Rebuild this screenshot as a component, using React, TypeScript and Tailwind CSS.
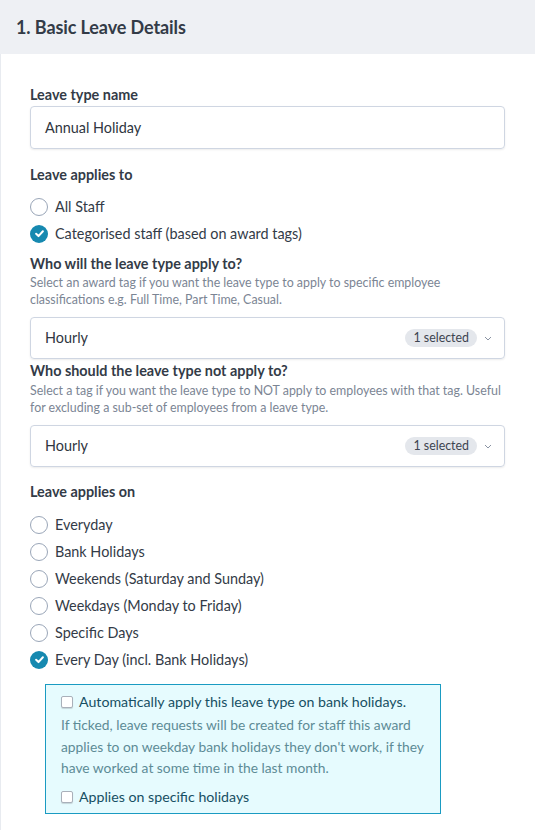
import React from "react";

const font = { fontFamily: "Lato, 'Open Sans', sans-serif" };

function Radio({ checked, label }: { checked?: boolean; label: string }) {
  return (
    <div className="flex items-center h-[27px]">
      {checked ? (
        <span className="w-[18px] h-[18px] rounded-full bg-[#1689b0] flex items-center justify-center">
          <svg width="11" height="11" viewBox="0 0 12 12">
            <path d="M2.3 6.3 L4.9 8.8 L9.7 3.6" stroke="white" strokeWidth="2.2" fill="none" strokeLinecap="round" strokeLinejoin="round" />
          </svg>
        </span>
      ) : (
        <span className="w-[18px] h-[18px] rounded-full border border-[#9aa6b8] bg-white" />
      )}
      <span className="ml-[7px] text-[14.4px] text-[#333b47]">{label}</span>
    </div>
  );
}

function Select() {
  return (
    <div className="h-[42px] rounded-[4px] border border-[#cfd6e2] shadow-[0_1px_2px_rgba(0,0,0,0.08)] flex items-center pl-[14px] pr-[12px]">
      <span className="text-[14.4px] text-[#2f3641] flex-1">Hourly</span>
      <span className="bg-[#e4e7ec] rounded-full px-[8px] h-[18px] flex items-center text-[12.4px] text-[#3d4450]">1 selected</span>
      <svg width="8" height="8" viewBox="0 0 8 8" className="ml-[7px]">
        <path d="M1 3 L4 6 L7 3" stroke="#8a93a3" strokeWidth="1" fill="none" />
      </svg>
    </div>
  );
}

function Checkbox() {
  return <span className="inline-block shrink-0 w-[12px] h-[12px] border border-[#a9b0ba] bg-white rounded-[2px] shadow-[0_1px_1px_rgba(0,0,0,0.15)]" />;
}

export default function App() {
  return (
    <div style={font} className="w-[535px] h-[830px] bg-white overflow-hidden">
      <div className="h-[54px] bg-[#eef0f4] flex items-center px-[16px]">
        <h2 className="text-[18px] font-bold text-[#333b47] tracking-[-0.1px]">1. Basic Leave Details</h2>
      </div>
      <div className="border-l border-[#e8ebf0] h-[776px] pl-[29px] pr-[30px] pt-[32px]">
        <div className="text-[14.4px] font-bold text-[#333b47] leading-[18px]">Leave type name</div>
        <div className="mt-[2px] h-[43px] rounded-[4px] border border-[#cfd6e2] shadow-[0_1px_2px_rgba(0,0,0,0.08)] flex items-center pl-[14px] text-[14.4px] text-[#2f3641]">
          Annual Holiday
        </div>
        <div className="mt-[17px] text-[14.4px] font-bold text-[#333b47] leading-[18px]">Leave applies to</div>
        <div className="mt-[9px]">
          <Radio label="All Staff" />
          <Radio checked label="Categorised staff (based on award tags)" />
        </div>
        <div className="mt-[8px] text-[14.4px] font-bold text-[#333b47] leading-[18px]">Who will the leave type apply to?</div>
        <div className="mt-[1px] text-[12.4px] text-[#7b8594] leading-[17px]">
          Select an award tag if you want the leave type to apply to specific employee classifications e.g. Full Time, Part Time, Casual.
        </div>
        <div className="mt-[9px]">
          <Select />
        </div>
        <div className="mt-[3px] text-[14.4px] font-bold text-[#333b47] leading-[18px]">Who should the leave type not apply to?</div>
        <div className="mt-[2px] text-[12.4px] text-[#7b8594] leading-[17px]">
          Select a tag if you want the leave type to NOT apply to employees with that tag. Useful for excluding a sub-set of employees from a leave type.
        </div>
        <div className="mt-[9px]">
          <Select />
        </div>
        <div className="mt-[16px] text-[14.4px] font-bold text-[#333b47] leading-[18px]">Leave applies on</div>
        <div className="mt-[10px]">
          <Radio label="Everyday" />
          <Radio label="Bank Holidays" />
          <Radio label="Weekends (Saturday and Sunday)" />
          <Radio label="Weekdays (Monday to Friday)" />
          <Radio label="Specific Days" />
          <Radio checked label="Every Day (incl. Bank Holidays)" />
        </div>
        <div className="ml-[15px] mt-[11px] w-[396px] border border-[#1a9bc2] bg-[#e6fbfe] pl-[15px] pr-[8px] pt-[6px] pb-[4px]">
          <div className="flex items-center h-[22px]">
            <Checkbox />
            <span className="ml-[6px] text-[14.2px] text-[#164f63]">Automatically apply this leave type on bank holidays.</span>
          </div>
          <div className="text-[13.8px] leading-[21.5px] text-[#5d8b96] mt-[1px]">
            If ticked, leave requests will be created for staff this award applies to on weekday bank holidays they don't work, if they have worked at some time in the last month.
          </div>
          <div className="flex items-center h-[24px] mt-[6px]">
            <Checkbox />
            <span className="ml-[6px] text-[14.2px] text-[#164f63]">Applies on specific holidays</span>
          </div>
        </div>
      </div>
    </div>
  );
}
